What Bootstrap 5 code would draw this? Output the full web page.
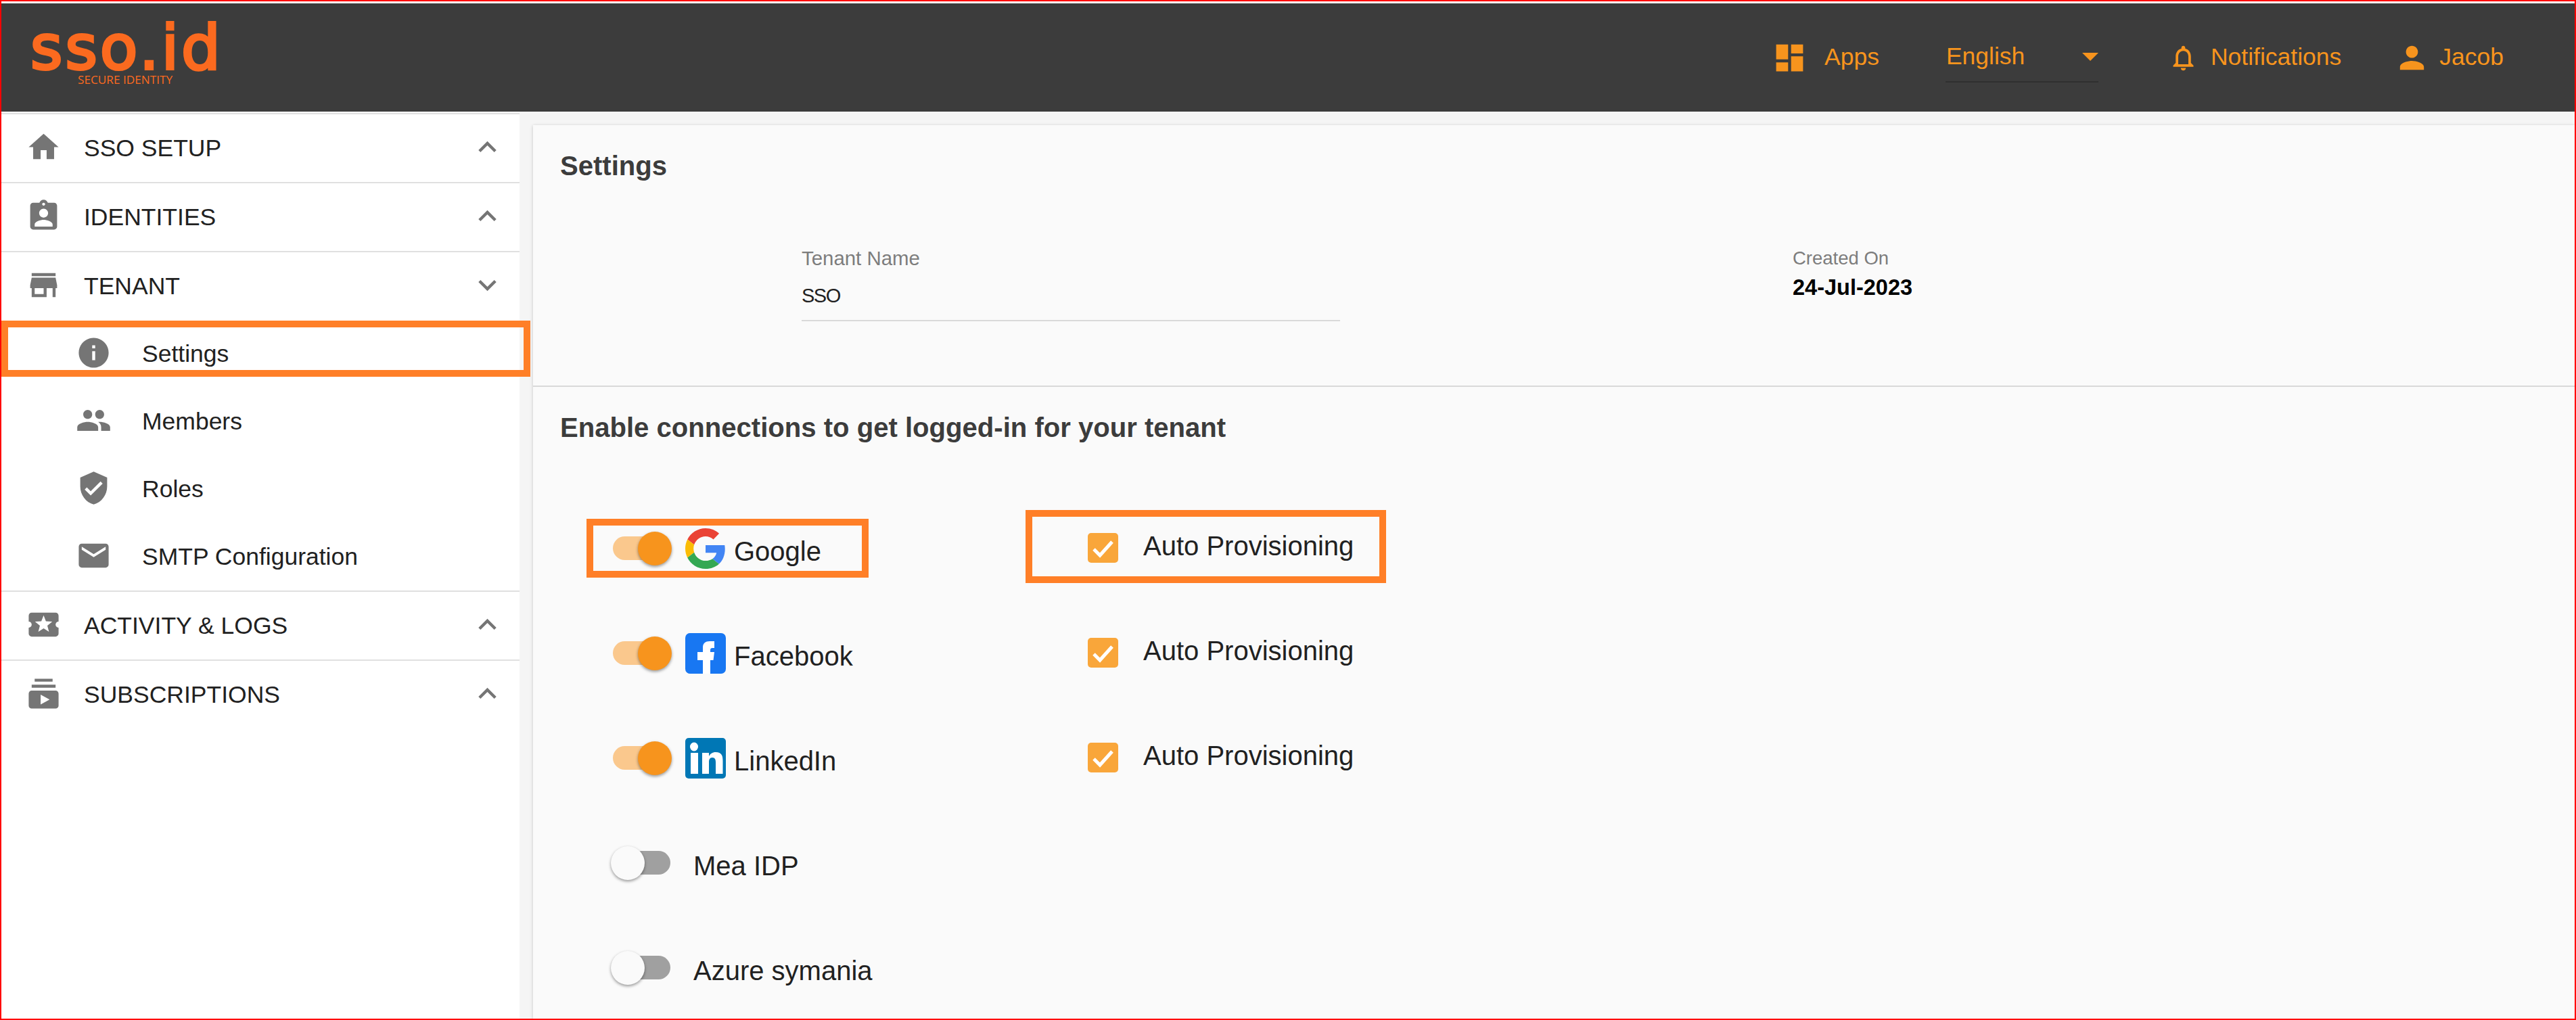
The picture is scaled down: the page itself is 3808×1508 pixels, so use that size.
<!DOCTYPE html>
<html lang="en">
<head>
<meta charset="utf-8">
<title>SSO.id Settings</title>
<link href="https://cdn.jsdelivr.net/npm/bootstrap@5.3.0/dist/css/bootstrap.min.css" rel="stylesheet">
<style>
html,body{height:100%;margin:0;overflow:hidden;background:#fff}
body{font-family:"Liberation Sans",Arial,sans-serif;color:#212121}
.frame{height:1508px;border:2px solid #f00;padding-top:3px;display:flex;flex-direction:column;overflow:hidden;background:#fff}
.topbar{flex:0 0 160px;background:#3c3c3c;padding:0 105px 0 0;display:flex;align-items:center;justify-content:space-between;color:#f7941d;font-size:35.5px}
.brand{margin-left:43px;color:#fb6a1f;align-self:flex-start}
.brand-word{font-family:"DejaVu Sans",sans-serif;font-size:91px;line-height:76px;margin-top:28px;letter-spacing:4px;-webkit-text-stroke:4px #fb6a1f}
.brand-tag{font-family:"Open Sans",sans-serif;font-size:17.2px;line-height:18px;margin-left:70px;white-space:nowrap}
.tb-group{display:flex;align-items:center}
.tb-item{display:flex;align-items:center;white-space:nowrap}
.ico{flex:none;display:block;fill:currentColor}
.ico-53{width:53px;height:53px}
.ico-45{width:45px;height:45px}
.apps-gap{gap:25px}
.lang{width:226px;height:74px;margin:0 103px 0 98px;border-bottom:2px solid #303030;display:flex;align-items:center;justify-content:space-between;padding-left:1px}
.bell-gap{gap:18px}
.user-gap{gap:14px;margin-left:78px}
.shell{flex:1 1 auto;display:flex;min-height:0;background:#f5f5f5}
.side{flex:0 0 766px;background:#fff;padding-top:2px}
.side-top{border-top:2px solid #e0e0e0}
.side-group{border-bottom:2px solid #e0e0e0}
.side-row{height:100px;display:flex;align-items:center;padding:0 21px 0 36px;font-size:35.5px;color:#212121;position:relative}
.side-row .ico{color:#757575;margin-top:-3px}
.side-label{margin-left:33px;flex:1 1 auto;padding-top:1px}
.side-sub{padding-left:110px}
.side-sub .side-label{margin-left:45px}
.mark-box{position:absolute;border:10px solid #ff7f27;pointer-events:none}
.mark-side{left:0;top:1px;width:782px;height:83px}
.content{flex:1 1 auto;padding:20px 0 0 20px;min-width:0}
.sheet{height:100%;background:#fafafa;box-shadow:0 1px 5px rgba(0,0,0,.2)}
.sheet-top{height:385px;padding:36px 0 0 40px}
.sheet-rule{height:2px;background:#d9d9d9}
.sheet-title{font-size:40.1px;font-weight:700;line-height:48px;color:#3c3c3c;margin:0}
.fields{display:flex;margin:95px 0 0 357px}
.field-a{width:796px;margin-right:669px}
.field-label{font-size:29.4px;line-height:36px;color:#7d7d7d}
.field-b .field-label{font-size:27.5px}
.field-value{font-size:29px;letter-spacing:-1.5px;line-height:36px;margin-top:19px;padding-bottom:18px;border-bottom:2px solid #d9d9d9;color:#212121}
.field-strong{font-size:32.5px;line-height:36px;font-weight:700;color:#000;margin-top:7px}
.sheet-bottom{padding:36px 0 0 40px}
.conn-list{margin:77px 0 0 75px}
.conn-row{height:155px;display:flex;align-items:center;position:relative;font-size:40px;color:#212121}
.conn-left{width:705px;display:flex;align-items:center;flex:none}
.switcher{width:90px;height:50px;flex:none;position:relative;margin-right:20px}
.switcher-track{position:absolute;left:3px;right:2px;top:7px;height:35px;border-radius:18px;background:#a0a0a0}
.switcher-knob{position:absolute;left:0;top:0;width:50px;height:50px;border-radius:50%;background:#fafafa;box-shadow:0 2px 4px rgba(0,0,0,.4)}
.is-on .switcher-track{background:#fac88d}
.is-on .switcher-knob{left:40px;background:#f7941d}
.brand-ico{width:60px;height:60px;flex:none;display:block;margin-right:12px}
.conn-name{padding-top:9px}
.no-icon{margin-left:12px}
.prov{display:flex;align-items:center;margin-top:-5px}
.prov .form-check-input{width:45px;height:44px;margin:3px 37px 0 0;border:0;border-radius:5px;background-color:#f9a63a;background-size:100%;float:none;flex:none}
.prov .form-check-input:checked{background-image:url("data:image/svg+xml,%3Csvg xmlns='http://www.w3.org/2000/svg' viewBox='0 0 45 44'%3E%3Cpath fill='none' stroke='%23fff' stroke-width='5' d='M9 24l9 9 18-20'/%3E%3C/svg%3E")}
.prov-label{margin-top:-3px}
.mark-google{left:-36px;top:34px;width:417px;height:87px}
.mark-auto{left:613px;top:21px;width:533px;height:108px}
</style>
</head>
<body>
<div class="frame">
  <header class="topbar">
    <div class="brand">
      <div class="brand-word">sso.id</div>
      <div class="brand-tag">SECURE IDENTITY</div>
    </div>
    <div class="tb-group">
      <div class="tb-item apps-gap">
        <svg class="ico ico-53" viewBox="0 0 24 24"><path d="M3 13h8V3H3v10zm0 8h8v-6H3v6zm10 0h8V11h-8v10zm0-18v6h8V3h-8z"/></svg>
        <span>Apps</span>
      </div>
      <div class="lang">
        <span>English</span>
        <svg class="ico" width="24" height="12" viewBox="7 10 10 5"><path d="M7 10l5 5 5-5z"/></svg>
      </div>
      <div class="tb-item bell-gap">
        <svg class="ico ico-45" viewBox="0 0 24 24"><path d="M12 22c1.1 0 2-.9 2-2h-4c0 1.1.9 2 2 2zm6-6v-5c0-3.07-1.63-5.64-4.5-6.32V4c0-.83-.67-1.5-1.5-1.5s-1.5.67-1.5 1.5v.68C7.64 5.36 6 7.92 6 11v5l-2 2v1h16v-1l-2-2zm-2 1H8v-6c0-2.48 1.51-4.5 4-4.5s4 2.02 4 4.5v6z"/></svg>
        <span>Notifications</span>
      </div>
      <div class="tb-item user-gap">
        <svg class="ico ico-53" viewBox="0 0 24 24"><path d="M12 12c2.21 0 4-1.79 4-4s-1.79-4-4-4-4 1.79-4 4 1.79 4 4 4zm0 2c-2.67 0-8 1.34-8 4v2h16v-2c0-2.66-5.33-4-8-4z"/></svg>
        <span>Jacob</span>
      </div>
    </div>
  </header>
  <div class="shell">
    <nav class="side">
      <div class="side-top"></div>
      <div class="side-group">
        <div class="side-row">
          <svg class="ico ico-53" viewBox="0 0 24 24"><path d="M10 20v-6h4v6h5v-8h3L12 3 2 12h3v8z"/></svg>
          <span class="side-label">SSO SETUP</span>
          <svg class="ico ico-53" viewBox="0 0 24 24"><path d="M12 8l-6 6 1.41 1.41L12 10.83l4.59 4.58L18 14z"/></svg>
        </div>
      </div>
      <div class="side-group">
        <div class="side-row">
          <svg class="ico ico-53" viewBox="0 0 24 24"><path d="M19 3h-4.18C14.4 1.84 13.3 1 12 1c-1.3 0-2.4.84-2.82 2H5c-1.1 0-2 .9-2 2v14c0 1.1.9 2 2 2h14c1.1 0 2-.9 2-2V5c0-1.1-.9-2-2-2zm-7 0c.55 0 1 .45 1 1s-.45 1-1 1-1-.45-1-1 .45-1 1-1zm0 4c1.66 0 3 1.34 3 3s-1.34 3-3 3-3-1.34-3-3 1.34-3 3-3zm6 12H6v-1.4c0-2 4-3.1 6-3.1s6 1.1 6 3.1V19z"/></svg>
          <span class="side-label">IDENTITIES</span>
          <svg class="ico ico-53" viewBox="0 0 24 24"><path d="M12 8l-6 6 1.41 1.41L12 10.83l4.59 4.58L18 14z"/></svg>
        </div>
      </div>
      <div class="side-group">
        <div class="side-row">
          <svg class="ico ico-53" viewBox="0 0 24 24"><path d="M20 4H4v2h16V4zm1 10v-2l-1-5H4l-1 5v2h1v6h10v-6h4v6h2v-6h1zm-9 4H6v-4h6v4z"/></svg>
          <span class="side-label">TENANT</span>
          <svg class="ico ico-53" viewBox="0 0 24 24"><path d="M16.59 8.59L12 13.17 7.41 8.59 6 10l6 6 6-6z"/></svg>
        </div>
        <div class="side-row side-sub">
          <svg class="ico ico-53" viewBox="0 0 24 24"><path d="M12 2C6.48 2 2 6.48 2 12s4.48 10 10 10 10-4.48 10-10S17.52 2 12 2zm1 15h-2v-6h2v6zm0-8h-2V7h2v2z"/></svg>
          <span class="side-label">Settings</span>
          <div class="mark-box mark-side"></div>
        </div>
        <div class="side-row side-sub">
          <svg class="ico ico-53" viewBox="0 0 24 24"><path d="M16 11c1.66 0 2.99-1.34 2.99-3S17.66 5 16 5c-1.66 0-3 1.34-3 3s1.34 3 3 3zm-8 0c1.66 0 2.99-1.34 2.99-3S9.66 5 8 5C6.34 5 5 6.34 5 8s1.34 3 3 3zm0 2c-2.33 0-7 1.17-7 3.5V19h14v-2.5c0-2.33-4.67-3.5-7-3.5zm8 0c-.29 0-.62.02-.97.05 1.16.84 1.97 1.97 1.97 3.45V19h6v-2.5c0-2.33-4.67-3.5-7-3.5z"/></svg>
          <span class="side-label">Members</span>
        </div>
        <div class="side-row side-sub">
          <svg class="ico ico-53" viewBox="0 0 24 24"><path d="M12 1L3 5v6c0 5.55 3.84 10.74 9 12 5.16-1.26 9-6.45 9-12V5l-9-4zm-2 16l-4-4 1.41-1.41L10 14.17l6.59-6.59L18 9l-8 8z"/></svg>
          <span class="side-label">Roles</span>
        </div>
        <div class="side-row side-sub">
          <svg class="ico ico-53" viewBox="0 0 24 24"><path d="M20 4H4c-1.1 0-1.99.9-1.99 2L2 18c0 1.1.9 2 2 2h16c1.1 0 2-.9 2-2V6c0-1.1-.9-2-2-2zm0 4l-8 5-8-5V6l8 5 8-5v2z"/></svg>
          <span class="side-label">SMTP Configuration</span>
        </div>
      </div>
      <div class="side-group">
        <div class="side-row">
          <svg class="ico ico-53" viewBox="0 0 24 24"><path d="M20 12c0-1.1.9-2 2-2V6c0-1.1-.9-2-2-2H4c-1.1 0-1.99.9-1.99 2v4c1.1 0 1.99.9 1.99 2s-.89 2-2 2v4c0 1.1.9 2 2 2h16c1.1 0 2-.9 2-2v-4c-1.1 0-2-.9-2-2zm-4.42 4.8L12 14.5l-3.58 2.3 1.08-4.12-3.29-2.69 4.24-.25L12 5.8l1.54 3.95 4.24.25-3.29 2.69 1.09 4.11z"/></svg>
          <span class="side-label">ACTIVITY &amp; LOGS</span>
          <svg class="ico ico-53" viewBox="0 0 24 24"><path d="M12 8l-6 6 1.41 1.41L12 10.83l4.59 4.58L18 14z"/></svg>
        </div>
      </div>
      <div class="side-row">
        <svg class="ico ico-53" viewBox="0 0 24 24"><path d="M20 8H4V6h16v2zm-2-6H6v2h12V2zm4 10v8c0 1.1-.9 2-2 2H4c-1.1 0-2-.9-2-2v-8c0-1.1.9-2 2-2h16c1.1 0 2 .9 2 2zm-6 4l-6-3.27v6.53L16 16z"/></svg>
        <span class="side-label">SUBSCRIPTIONS</span>
        <svg class="ico ico-53" viewBox="0 0 24 24"><path d="M12 8l-6 6 1.41 1.41L12 10.83l4.59 4.58L18 14z"/></svg>
      </div>
    </nav>
    <main class="content">
      <div class="sheet">
        <section class="sheet-top">
          <h1 class="sheet-title">Settings</h1>
          <div class="fields">
            <div class="field-a">
              <div class="field-label">Tenant Name</div>
              <div class="field-value">SSO</div>
            </div>
            <div class="field-b">
              <div class="field-label">Created On</div>
              <div class="field-strong">24-Jul-2023</div>
            </div>
          </div>
        </section>
        <div class="sheet-rule"></div>
        <section class="sheet-bottom">
          <h2 class="sheet-title">Enable connections to get logged-in for your tenant</h2>
          <div class="conn-list">
            <div class="conn-row">
              <div class="conn-left">
                <span class="switcher is-on"><span class="switcher-track"></span><span class="switcher-knob"></span></span>
                <svg class="brand-ico" viewBox="0 0 48 48"><path fill="#EA4335" d="M24 9.5c3.54 0 6.71 1.22 9.21 3.6l6.85-6.85C35.9 2.38 30.47 0 24 0 14.62 0 6.51 5.38 2.56 13.22l7.98 6.19C12.43 13.72 17.74 9.5 24 9.5z"/><path fill="#4285F4" d="M46.98 24.55c0-1.57-.15-3.09-.38-4.55H24v9.02h12.94c-.58 2.96-2.26 5.48-4.78 7.18l7.73 6c4.51-4.18 7.09-10.36 7.09-17.65z"/><path fill="#FBBC05" d="M10.53 28.59c-.48-1.45-.76-2.99-.76-4.59s.27-3.14.76-4.59l-7.98-6.19C.92 16.46 0 20.12 0 24c0 3.88.92 7.54 2.56 10.78l7.97-6.19z"/><path fill="#34A853" d="M24 48c6.48 0 11.93-2.13 15.89-5.81l-7.73-6c-2.15 1.45-4.92 2.3-8.16 2.3-6.26 0-11.57-4.22-13.47-9.91l-7.98 6.19C6.51 42.62 14.62 48 24 48z"/></svg>
                <span class="conn-name">Google</span>
              </div>
              <label class="prov"><input class="form-check-input" type="checkbox" checked><span class="prov-label">Auto Provisioning</span></label>
              <div class="mark-box mark-google"></div>
              <div class="mark-box mark-auto"></div>
            </div>
            <div class="conn-row">
              <div class="conn-left">
                <span class="switcher is-on"><span class="switcher-track"></span><span class="switcher-knob"></span></span>
                <svg class="brand-ico" viewBox="0 0 60 60"><rect width="60" height="60" rx="7" fill="#1877f2"/><path fill="#fff" d="M26 60V40H18V28h8v-7c0-6 4-9 10-9h7v10h-3c-2 0-3 1-3 3v3h6l-1.5 12H37v20z"/></svg>
                <span class="conn-name">Facebook</span>
              </div>
              <label class="prov"><input class="form-check-input" type="checkbox" checked><span class="prov-label">Auto Provisioning</span></label>
            </div>
            <div class="conn-row">
              <div class="conn-left">
                <span class="switcher is-on"><span class="switcher-track"></span><span class="switcher-knob"></span></span>
                <svg class="brand-ico" viewBox="0 0 60 60"><rect width="60" height="60" rx="5" fill="#0077b5"/><ellipse cx="13" cy="13" rx="6" ry="6.5" fill="#fff"/><rect x="8" y="22" width="11" height="31" fill="#fff"/><path fill="#fff" d="M25 22h10v5c2-3.5 5-6 10-6 9 0 10.5 5.5 10.5 13v19H45V36c0-4-1-7-5-7s-5 3-5 7v17H25z"/></svg>
                <span class="conn-name">LinkedIn</span>
              </div>
              <label class="prov"><input class="form-check-input" type="checkbox" checked><span class="prov-label">Auto Provisioning</span></label>
            </div>
            <div class="conn-row">
              <div class="conn-left">
                <span class="switcher"><span class="switcher-track"></span><span class="switcher-knob"></span></span>
                <span class="conn-name no-icon">Mea IDP</span>
              </div>
            </div>
            <div class="conn-row">
              <div class="conn-left">
                <span class="switcher"><span class="switcher-track"></span><span class="switcher-knob"></span></span>
                <span class="conn-name no-icon">Azure symania</span>
              </div>
            </div>
          </div>
        </section>
      </div>
    </main>
  </div>
</div>
<script src="https://cdn.jsdelivr.net/npm/bootstrap@5.3.0/dist/js/bootstrap.bundle.min.js"></script>
</body>
</html>
